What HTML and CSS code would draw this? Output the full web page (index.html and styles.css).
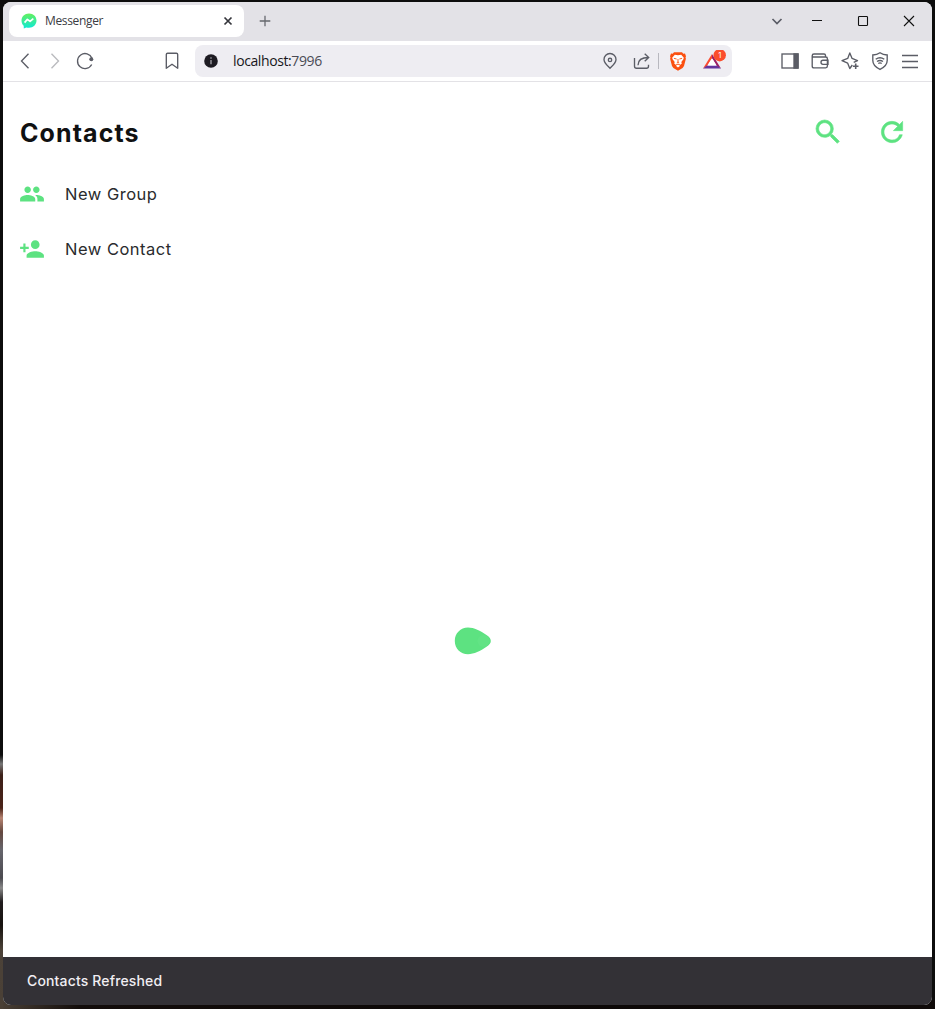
FILE: index.html
```html
<!DOCTYPE html>
<html lang="en">
<head>
<meta charset="utf-8">
<title>Messenger</title>
<link rel="stylesheet" href="styles.css">
</head>
<body>
<div class="window">
  <header class="tabstrip">
    <div class="tab">
      <svg class="favicon" width="16" height="16" viewBox="0 0 16 16"><defs><linearGradient id="fav" x1="0" y1="0" x2="0" y2="1"><stop offset="0" stop-color="#65f05c"/><stop offset="1" stop-color="#0ce8d8"/></linearGradient></defs><path fill="url(#fav)" d="M8 .4C3.700.4.5 3.500.5 7.600c0 2.100.8 3.900 2.200 5.200L2.800 15.600l2.500-1.200c.9.300 1.700.4 2.700.4 4.300 0 7.500-3.100 7.500-7.200S12.300.4 8 .4z"/><path d="M3.600 9.600L6.400 6.300l2.700 2.100L12.300 5.600" fill="none" stroke="#fff" stroke-width="1.700" stroke-linejoin="round"/></svg>
      <span class="tab-title">Messenger</span>
      <svg class="tab-close" width="10" height="10" viewBox="0 0 10 10"><path d="M1.500 1.500l7 7m0-7l-7 7" stroke="#35363c" stroke-width="1.700"/></svg>
    </div>
    <svg class="new-tab" width="12" height="12" viewBox="0 0 12 12"><path d="M6 .7v10.600M.7 6h10.600" stroke="#66686e" stroke-width="1.300"/></svg>
    <div class="controls">
      <span class="chev"><svg width="12" height="12" viewBox="0 0 12 12"><path d="M1.500 4l4.500 4.500L10.500 4" fill="none" stroke="#5b5d66" stroke-width="1.700"/></svg></span>
      <span class="ctl"><svg width="12" height="12" viewBox="0 0 12 12"><path d="M1 5.500h10" stroke="#111"/></svg></span>
      <span class="ctl"><svg width="12" height="12" viewBox="0 0 12 12"><rect x="1.500" y="1.500" width="9" height="9" rx=".8" fill="none" stroke="#111" stroke-width="1.100"/></svg></span>
      <span class="ctl"><svg width="12" height="12" viewBox="0 0 12 12"><path d="M1 1l10 10M11 1L1 11" stroke="#111" stroke-width="1.100"/></svg></span>
    </div>
  </header>

  <nav class="toolbar">
    <span class="tool"><svg viewBox="0 0 20 20"><path d="M13.500 2.700L6.500 10l7 7.300"/></svg></span>
    <span class="tool faded"><svg viewBox="0 0 20 20"><path d="M6.500 2.700l7 7.300-7 7.300"/></svg></span>
    <span class="tool"><svg viewBox="0 0 20 20"><path d="M16.700 13.500A7.500 7.500 0 1 1 17 7.300"/><circle cx="16.300" cy="8.300" r="2" fill="#5b5d66" stroke="none"/></svg></span>
    <span class="tool bookmark"><svg viewBox="0 0 20 20"><path d="M4.300 17.300V3.500q0-1.300 1.300-1.300h8.800q1.300 0 1.300 1.300v13.800L10 13.300z" stroke-linejoin="round"/></svg></span>
    <div class="address">
      <svg class="info" width="14" height="14" viewBox="0 0 14 14"><circle cx="7" cy="7" r="6.800" fill="#1d1b22"/><path d="M7 6v4.200" fill="none" stroke="#b5b4ba" stroke-width="1.200"/><circle cx="7" cy="4" r=".8" fill="#b5b4ba"/></svg>
      <span class="url">localhost:<span class="port">7996</span></span>
      <span class="tool pin"><svg viewBox="0 0 20 20"><path d="M10 17.200C7.500 14.700 4 12 4 8.500a6 6 0 0 1 12 0c0 3.500-3.500 6.200-6 8.700z"/><circle cx="10" cy="8.900" r="1.700"/></svg></span>
      <span class="tool share"><svg viewBox="0 0 20 20"><path d="M2.500 7v8.200q0 2 2 2h10q2 0 2-2v-1.500M6 14.200q0-7.700 10.500-7.700M12.700 2.700l4 3.800-4 3.800"/></svg></span>
      <span class="divider"></span>
      <svg class="brave" width="18" height="20" viewBox="0 0 18 20"><path d="M5 1.200h8l1.300 1.500 1.700-.1L17 5.300l-.5 1.300.4 1.200-1.900 7.200-1.400 1.900L9 19.700l-4.600-2.800L3 15 1.100 7.800l.4-1.200L1 5.300l1-2.700 1.700.1z" fill="#fb5010"/><path d="M9 4.200l3.200-.5 2.600 3-.4 1.600-2.100 2.700.5 1.500-1.400 1.200-1.400-.8-1-.3-1 .3-1.400.8-1.400-1.200.5-1.500-2.100-2.700-.4-1.600 2.600-3zM6.800 14.700L9 13.500l2.200 1.200L9 16.500z" fill="#fff"/><path d="M4.900 7.300l2.700.7M13.100 7.300l-2.700.7M9 8v3l-1.200.8M9 11l1.200.8" stroke="#fb5010" stroke-width=".9" fill="none"/></svg>
      <svg class="rewards" width="24" height="22" viewBox="0 0 24 22"><path d="M10 4L1 18.500l4-2.300 5-8z" fill="#fb4b30"/><path d="M10 4l9 14.500-4-2.300-5-8z" fill="#9d2064"/><path d="M1 18.500h18l-4-3H5z" fill="#65359d"/><path d="M10 8.200L14.600 15.600H5.400z" fill="#fff"/><circle cx="17.700" cy="5.200" r="6.200" fill="#fb4e2c"/><text x="16.200" y="7.800" class="badge">1</text></svg>
    </div>
    <div class="extras">
      <span class="tool"><svg viewBox="0 0 20 20"><rect x="2" y="3" width="16" height="14"/><path d="M14 3h4v14h-4z" fill="#5b5d66"/></svg></span>
      <span class="tool"><svg viewBox="0 0 20 20"><path d="M15.500 6V4.500q0-1.500-1.500-1.500H4Q2.200 3 2.200 4.700v10.200q0 1.900 1.800 1.900h11.700q1.700 0 1.700-1.700V7.700q0-1.700-1.700-1.700H4Q2.200 6 2.200 4.700M18 9.200h-5q-2 0-2 2.100t2 2.100h5z"/></svg></span>
      <span class="tool"><svg viewBox="0 0 20 20"><path d="M12.300 14L9.800 17.500 7.700 12.200 2 9.700 7.700 7.400 9.800 2l2.300 5.400 5.400 2.300-3.800 1.700" stroke-linejoin="round"/><path d="M15.700 12.400v5.600M12.900 15.200h5.600" stroke-width="1.600"/></svg></span>
      <span class="tool"><svg viewBox="0 0 20 20"><path d="M10 1.800q3 2.200 7.200 2.200v5.500q0 5.500-7.200 8.900-7.200-3.400-7.200-8.900V4Q7 4 10 1.800z"/><path d="M5.700 8.300q4.300-3 8.600 0M7 10.500q3-2 6 0M8.300 12.500q1.700-1.200 3.400 0"/></svg></span>
      <span class="tool"><svg viewBox="0 0 20 20"><path d="M2 4.500h16M2 10.500h16M2 16.500h16"/></svg></span>
    </div>
  </nav>

  <main class="page">
    <div class="heading">
      <h1>Contacts</h1>
      <svg class="action search" viewBox="0 0 24 24"><path d="M15.500 14h-.79l-.28-.27A6.471 6.471 0 0 0 16 9.500 6.500 6.500 0 1 0 9.500 16c1.610 0 3.090-.59 4.230-1.570l.27.28v.79l5 4.990L20.490 19l-4.990-5zm-6 0C7.010 14 5 11.990 5 9.500S7.010 5 9.500 5 14 7.010 14 9.500 11.990 14 9.500 14z"/></svg>
      <svg class="action refresh" viewBox="0 0 24 24"><path d="M17.650 6.350A7.958 7.958 0 0 0 12 4c-4.420 0-7.990 3.580-7.990 8s3.570 8 7.990 8c3.730 0 6.840-2.550 7.730-6h-2.080A5.990 5.990 0 0 1 12 18c-3.310 0-6-2.690-6-6s2.690-6 6-6c1.660 0 3.140.69 4.220 1.780L13 11h7V4l-2.350 2.350z"/></svg>
    </div>
    <div class="row">
      <svg viewBox="0 0 24 24"><path d="M16 11c1.660 0 2.990-1.340 2.990-3S17.660 5 16 5s-3 1.340-3 3 1.340 3 3 3zm-8 0c1.660 0 2.990-1.340 2.990-3S9.660 5 8 5 5 6.340 5 8s1.340 3 3 3zm0 2c-2.330 0-7 1.170-7 3.500V19h14v-2.500c0-2.330-4.670-3.500-7-3.500zm8 0c-.29 0-.62.020-.97.050 1.160.84 1.970 1.970 1.970 3.450V19h6v-2.500c0-2.330-4.670-3.500-7-3.500z"/></svg>
      <span>New Group</span>
    </div>
    <div class="row">
      <svg viewBox="0 0 24 24"><path d="M15 12c2.210 0 4-1.790 4-4s-1.790-4-4-4-4 1.790-4 4 1.790 4 4 4zm-9-2V7H4v3H1v2h3v3h2v-3h3v-2H6zm9 4c-2.670 0-8 1.340-8 4v2h16v-2c0-2.660-5.330-4-8-4z"/></svg>
      <span>New Contact</span>
    </div>
    <div class="loading">
      <svg width="38" height="28" viewBox="0 0 38 28"><path d="M14 .6C6.500.6.800 6.500.8 13.900S6.500 27.200 14 27.200c6 0 12.500-3.200 18.500-7.400 3.300-2.300 4.300-4 4.300-5.900s-1-3.600-4.300-5.900C26.500 3.800 20 .6 14 .6z" fill="#5de281"/><circle cx="29.500" cy="13.900" r="6" fill="#62e385"/></svg>
    </div>
  </main>
  <footer class="snackbar">Contacts Refreshed</footer>
</div>
</body>
</html>
```
FILE: styles.css
```css
* { box-sizing: border-box; }
body {
  margin: 0;
  height: 1009px;
  padding: 2px 3px 4px;
  overflow: hidden;
  background:
    linear-gradient(#0d0d0d, #0d0d0d 755px, #777 764px, #3c2018 775px, #4a2318 808px, #b78472 818px, #64483f 832px, #66656c 850px, #4b4a50 878px, #888 888px, #211d1e 902px, #17130f 925px, #4c4238 950px, #4a4036 1000px) 0 0 / 3px 1009px no-repeat,
    linear-gradient(90deg, #4a4036, #130d0b 80px, #0c0807 500px, #100b0a) 0 1000px / 100% 9px no-repeat,
    #0d0d0d;
  font-family: Inter, sans-serif;
}
svg { display: block; flex: none; }
.window {
  width: 929px;
  height: 1003px;
  display: flex;
  flex-direction: column;
  overflow: hidden;
  border-radius: 8px;
  background: #fff;
}
.tabstrip { height: 39px; flex: none; display: flex; align-items: center; padding-left: 6px; background: #e3e2e7; }
.tab {
  width: 235px;
  height: 32px;
  display: flex;
  align-items: center;
  padding: 0 11px 0 12px;
  border-radius: 8px;
  background: #fff;
  margin-bottom: 1px;
}
.tab-title { margin-left: 8px; font: 12px/16px "Open Sans", sans-serif; letter-spacing: -.35px; color: #3b3c43; }
.tab-close { margin-left: auto; }
.new-tab { margin: 0 0 1px 15px; }
.controls { margin-left: auto; display: flex; padding-bottom: 1px; }
.chev, .ctl { height: 32px; display: flex; align-items: center; justify-content: center; }
.chev { width: 34px; }
.ctl { width: 46px; }

.toolbar { height: 41px; flex: none; display: flex; align-items: center; padding: 0 7px; border-bottom: 1px solid #e3e2e6; }
.tool { width: 30px; display: flex; justify-content: center; flex: none; }
.tool svg { width: 20px; height: 20px; fill: none; stroke: #5b5d66; stroke-width: 1.35; }
.faded { opacity: .42; }
.bookmark { margin-left: 57px; }
.address { width: 537px; height: 32px; margin-left: 8px; padding: 0 6px 0 9px; display: flex; align-items: center; border-radius: 8px; background: #eeedf2; }
.url { margin-left: 15px; font: 14px/20px "Open Sans", sans-serif; letter-spacing: -.4px; color: #17171c; }
.port { color: #4b4c55; }
.pin { margin-left: auto; }
.share { margin-left: 2px; }
.divider { width: 1px; height: 16px; margin-left: 1px; background: #b8b8bf; }
.brave { margin-left: 10px; }
.rewards { margin: 0 0 1px 15px; }
.badge { font: 7.5px Inter, sans-serif; fill: #fff; }
.extras { display: flex; margin-left: 43px; }

.page { flex: 1; display: flex; flex-direction: column; padding-left: 17px; }
.heading { height: 84px; display: flex; align-items: center; padding: 17px 24px 0 0; }
h1 { margin: 0 auto 0 0; font-size: 25px; line-height: 34px; font-weight: 700; letter-spacing: 1.1px; color: #101112; }
.action { width: 32px; height: 32px; margin-bottom: 2px; fill: #5de281; stroke: #5de281; stroke-width: .4; }
.search { stroke-width: .5; }
.refresh { margin-left: 32px; }
.row { height: 55px; display: flex; align-items: center; gap: 20px; font-size: 16.5px; font-weight: 400; letter-spacing: .5px; color: #2a2b2d; }
.row svg { width: 26px; height: 26px; margin-left: -1px; fill: #5de281; }
.row span { padding-top: 1px; }
.loading { flex: 1; display: flex; justify-content: center; align-items: flex-start; padding-top: 351px; }
.loading svg { margin-right: 6px; }
.snackbar { height: 48px; flex: none; display: flex; align-items: center; padding: 0 0 1px 24px; background: #333136; color: #f1eef3; font-size: 14px; font-weight: 500; letter-spacing: .15px; }
```
